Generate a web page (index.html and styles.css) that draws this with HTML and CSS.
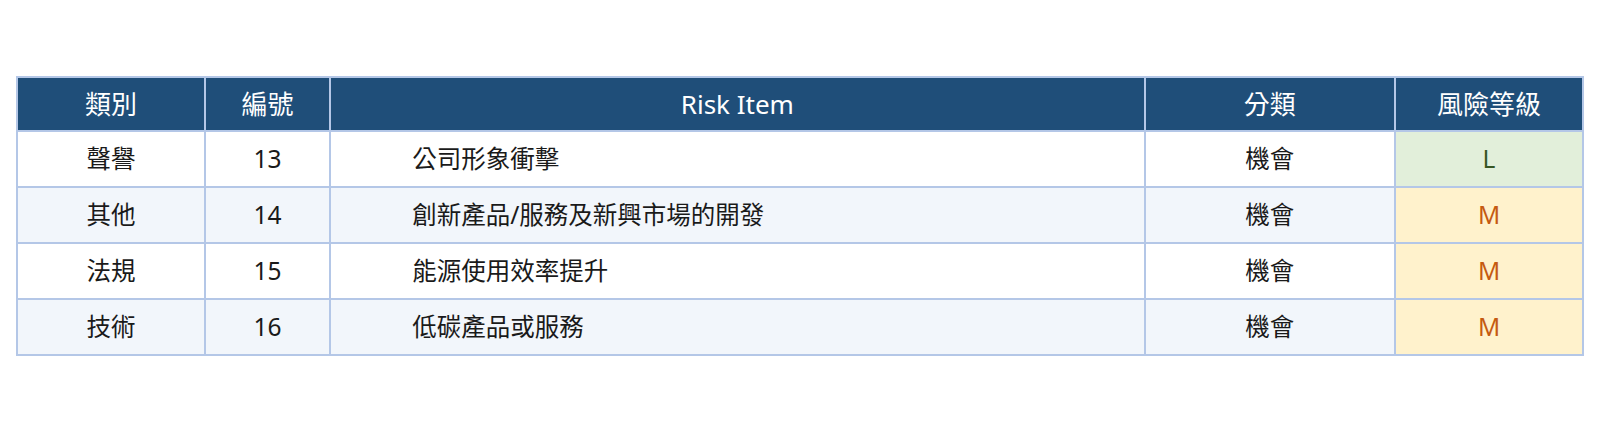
FILE: index.html
```html
<!DOCTYPE html>
<html lang="zh-Hant">
<head>
<meta charset="utf-8">
<link rel="stylesheet" href="styles.css">
</head>
<body>
<div class="wrap">
<table class="risk">
  <colgroup>
    <col class="c1"><col class="c2"><col class="c3"><col class="c4"><col class="c5">
  </colgroup>
  <thead>
    <tr><th>類別</th><th>編號</th><th>Risk Item</th><th>分類</th><th>風險等級</th></tr>
  </thead>
  <tbody>
    <tr><td>聲譽</td><td>13</td><td class="item">公司形象衝擊</td><td>機會</td><td class="lv-l">L</td></tr>
    <tr class="alt"><td>其他</td><td>14</td><td class="item">創新產品/服務及新興市場的開發</td><td>機會</td><td class="lv-m">M</td></tr>
    <tr><td>法規</td><td>15</td><td class="item">能源使用效率提升</td><td>機會</td><td class="lv-m">M</td></tr>
    <tr class="alt"><td>技術</td><td>16</td><td class="item">低碳產品或服務</td><td>機會</td><td class="lv-m">M</td></tr>
  </tbody>
</table>
</div>
</body>
</html>
```

FILE: styles.css
```css
html, body {
  margin: 0;
  padding: 0;
  background: #ffffff;
}
.wrap {
  padding: 76px 16px 0 16px;
}
.risk {
  width: 100%;
  border-collapse: collapse;
  table-layout: fixed;
  font-family: "Noto Sans", "Noto Sans CJK TC", sans-serif;
  font-size: 24.5px;
  color: #1a1a1a;
}
.c1 { width: 12%; }
.c2 { width: 8%; }
.c3 { width: 52%; }
.c4 { width: 16%; }
.c5 { width: 12%; }
.risk th, .risk td {
  border: 2px solid #b4c7e7;
  height: 54px;
  padding: 0 8px;
  text-align: center;
  vertical-align: middle;
  line-height: 30px;
}
.risk th {
  height: 52px;
  background: #1f4e79;
  color: #ffffff;
  font-weight: 400;
  font-size: 26px;
}
.risk td {
  background: #ffffff;
}
.risk tr.alt td {
  background: #f2f6fb;
}
.risk td.item {
  text-align: left;
  padding-left: 81px;
}
.risk td.lv-l, .risk tr.alt td.lv-l {
  background: #e2efda;
  color: #375623;
}
.risk td.lv-m, .risk tr.alt td.lv-m {
  background: #fff2cc;
  color: #c55a11;
}
```
